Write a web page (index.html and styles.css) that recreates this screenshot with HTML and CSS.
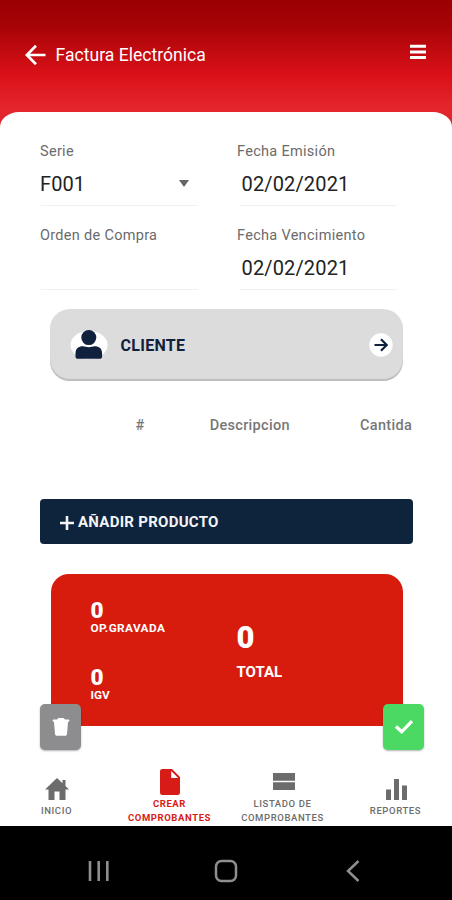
FILE: index.html
```html
<!DOCTYPE html>
<html lang="es">
<head>
<meta charset="utf-8">
<meta name="viewport" content="width=device-width, initial-scale=1">
<title>Factura Electrónica</title>
<link rel="stylesheet" href="styles.css">
</head>
<body>
<div class="app">
  <header class="topbar">
    <svg class="back" width="22" height="22" viewBox="0 0 22 22"><path d="M11 1.800 1.800 11l9.200 9.200M2 11h18.500" fill="none" stroke="currentColor" stroke-width="2.700"/></svg>
    <h1 class="title">Factura Electrónica</h1>
    <svg class="menu" width="16" height="16" viewBox="0 0 16 16" fill="currentColor"><path d="M0 .8h16v3H0zM0 6.400h16v3H0zM0 12h16v3H0z"/></svg>
  </header>
  <main class="sheet">
    <form class="fields">
      <div class="field">
        <span class="label">Serie</span>
        <div class="value"><span class="serie">F001</span><svg class="caret" width="10" height="7" viewBox="0 0 10 7"><path d="M0 0h10L5 7z" fill="currentColor"/></svg></div>
      </div>
      <div class="field">
        <span class="label">Fecha Emisión</span>
        <div class="value date">02/02/2021</div>
      </div>
      <div class="field">
        <span class="label">Orden de Compra</span>
        <div class="value"></div>
      </div>
      <div class="field">
        <span class="label">Fecha Vencimiento</span>
        <div class="value date">02/02/2021</div>
      </div>
    </form>
    <section class="client">
      <svg class="avatar" width="38" height="34" viewBox="0 0 38 34"><ellipse cx="19" cy="17" rx="18.500" ry="14" fill="#fff"/><circle cx="18.800" cy="9.600" r="7.500" fill="currentColor"/><path d="M5.500 28.500v-3c0-5 3-7.200 7.500-7.200 2 0 3.500.9 5.800.9s3.800-.9 5.800-.9c4.500 0 7.500 2.200 7.500 7.200v3c0 1.400-1 2.300-2.400 2.300H7.900c-1.400 0-2.400-.9-2.400-2.300z" fill="currentColor"/></svg>
      <span class="client-name">CLIENTE</span>
      <svg class="go" width="24" height="24" viewBox="0 0 24 24"><circle cx="12" cy="12" r="11.700" fill="#fff"/><path d="M5.500 12h11.500M12 6.300l5.700 5.700-5.700 5.700" fill="none" stroke="currentColor" stroke-width="2.200"/></svg>
    </section>
    <div class="columns"><span class="num">#</span><span class="desc">Descripcion</span><span class="qty">Cantida</span></div>
    <button class="add" type="button"><svg width="14" height="14" viewBox="0 0 14 14"><path d="M7 0v14M0 7h14" stroke="currentColor" stroke-width="2.600"/></svg><span>AÑADIR PRODUCTO</span></button>
    <section class="totals">
      <div class="parts">
        <div class="part"><b>0</b><small class="taxed">OP.GRAVADA</small></div>
        <div class="part"><b>0</b><small>IGV</small></div>
      </div>
      <div class="total"><b>0</b><span>TOTAL</span></div>
      <button class="fab trash" type="button" aria-label="Eliminar"><svg width="18" height="20" viewBox="0 0 18 20" fill="currentColor"><path d="M.5 4 1 2.500h4L6.500 1h5L13 2.500h4l.5 1.500-1.500 1L15 17c-.1 1.200-.8 1.800-2 1.800H5c-1.200 0-1.900-.6-2-1.800L2 5z"/></svg></button>
      <button class="fab ok" type="button" aria-label="Confirmar"><svg width="20" height="16" viewBox="0 0 20 16"><path d="M2 7.500l5.700 5.300L18 2.200" fill="none" stroke="currentColor" stroke-width="3.300"/></svg></button>
    </section>
    <nav class="tabs">
      <a class="tab"><svg width="24" height="22" viewBox="0 0 24 22" fill="currentColor"><path d="M12 0 0 11.500h3.500V22h6v-8.500h5V22h6V11.500H24l-3.500-3.400V2h-3v3.200z"/></svg><span>INICIO</span></a>
      <a class="tab active"><svg width="20" height="26" viewBox="0 0 20 26" fill="currentColor"><path d="M2.300 0H12l8 8v15.700a2.300 2.300 0 0 1-2.300 2.300H2.300A2.300 2.300 0 0 1 0 23.700V2.300A2.300 2.300 0 0 1 2.300 0zm8.900 2v7h7z"/></svg><span>CREAR<br>COMPROBANTES</span></a>
      <a class="tab list"><svg width="22" height="17" viewBox="0 0 22 17" fill="currentColor"><path d="M0 0h22v7.700H0zM0 9.300h22V17H0z"/></svg><span>LISTADO DE<br>COMPROBANTES</span></a>
      <a class="tab"><svg class="bars" width="21" height="21" viewBox="0 0 21 21" fill="currentColor"><path d="M0 10.500h5V21H0zM8 0h5v21H8zM16 6.500h5V21h-5z"/></svg><span>REPORTES</span></a>
    </nav>
  </main>
  <footer class="system">
    <svg width="22" height="22" viewBox="0 0 22 22"><path d="M2 1v20M10.700 1v20M19.300 1v20" stroke="currentColor" stroke-width="2.600"/></svg>
    <svg class="home" width="24" height="24" viewBox="0 0 24 24"><rect x="2" y="2" width="20" height="20" rx="5.500" fill="none" stroke="currentColor" stroke-width="2.500"/></svg>
    <svg width="14" height="22" viewBox="0 0 14 22"><path d="M12.500 1 2 11l10.500 10" fill="none" stroke="currentColor" stroke-width="2.500"/></svg>
  </footer>
</div>
</body>
</html>
```

FILE: styles.css
```css
* { box-sizing: border-box; }
body { margin: 0; background: #000; font-family: Roboto, "Liberation Sans", sans-serif; }
svg { display: block; flex: none; }
button { border: 0; font: inherit; }

.app {
  width: 452px;
  height: 900px;
  display: flex;
  flex-direction: column;
  background: linear-gradient(#9a0002 0, #a80408 28px, #da1018 74px, #e4262c 108px, #d9252b 130px);
}

.topbar {
  height: 112px;
  padding: 0 26px 3px 25px;
  display: flex;
  align-items: center;
  color: #fff;
}
.title { margin: 0 0 0 8.5px; font-size: 17.5px; font-weight: 400; letter-spacing: .04px; }
.menu { margin: 0 0 6px auto; }

.sheet {
  height: 714px;
  padding: 0 40px;
  background: #fff;
  border-radius: 19px 19px 0 0 / 15px 15px 0 0;
  display: flex;
  flex-direction: column;
}

.fields {
  padding-top: 30px;
  display: grid;
  grid-template-columns: 158px 160px;
  column-gap: 39px;
  row-gap: 19px;
}
.field { height: 65px; }
.label { display: block; line-height: 20px; font-size: 14.5px; letter-spacing: .3px; color: #6b6b6b; }
.value {
  height: 44px;
  margin-left: 1px;
  display: flex;
  align-items: center;
  justify-content: space-between;
  padding: 0 9px 0 0;
  border-bottom: 1px solid #f1f1f1;
  font-size: 20px;
  letter-spacing: .1px;
  color: #222;
}
.serie { margin-left: -1px; }
.caret { color: #666; }
.date { margin-left: 3px; padding-left: 1.5px; letter-spacing: .15px; }

.client {
  height: 72px;
  margin: 18px 9px 0 10px;
  padding: 0 10px 0 20px;
  display: flex;
  align-items: center;
  border-radius: 20px;
  background: #dcdcdc;
  box-shadow: inset 0 -2px 1px #bdbdbd;
  color: #10213d;
}
.client-name { margin-left: 12.5px; font-size: 16px; font-weight: 700; letter-spacing: .3px; }
.go { margin-left: auto; }

.columns {
  margin-top: 35px;
  height: 20px;
  display: flex;
  line-height: 20px;
  font-size: 14.5px;
  font-weight: 500;
  letter-spacing: .3px;
  color: #777;
}
.num { width: 75px; margin-left: 95.5px; }
.desc { width: 152px; }

.add {
  height: 45px;
  margin: 63px -1px 0 0;
  padding: 0 20px;
  display: flex;
  align-items: center;
  gap: 4px;
  border-radius: 4px;
  background: #0e233c;
  color: #f2f4f6;
  font-size: 15px;
  font-weight: 700;
  letter-spacing: .27px;
}
.add svg { margin-top: 3px; }

.totals {
  position: relative;
  height: 152px;
  margin: 30px 9px 0 11px;
  padding-left: 39.5px;
  display: flex;
  border-radius: 18px;
  background: #d71b0d;
  color: #fff;
  font-weight: 700;
}
.parts { width: 146px; padding-top: 24px; display: grid; grid-auto-rows: 67px; align-content: start; }
.part b, .part small { display: block; }
.part b { font-size: 22.5px; line-height: 25px; }
.part small { font-size: 11.8px; line-height: 11px; }
.part .taxed { letter-spacing: .4px; }
.total { padding-top: 47px; }
.total b, .total span { display: block; }
.total b { font-size: 31px; line-height: 34px; }
.total span { margin-top: 7px; font-size: 15px; line-height: 20px; }

.fab {
  position: absolute;
  top: 130px;
  width: 41px;
  height: 46px;
  padding: 0;
  display: grid;
  place-items: center;
  border-radius: 5px;
  color: #fff;
  box-shadow: 0 1px 2px rgba(0, 0, 0, .3);
}
.trash { left: -11px; background: #8d8d8f; }
.ok { right: -21px; background: #4bd964; }

.tabs {
  height: 82px;
  margin: auto -40px 0;
  display: grid;
  grid-template-columns: repeat(4, 113px);
}
.tab {
  display: flex;
  flex-direction: column;
  align-items: center;
  padding-top: 34px;
  color: #6c6c6c;
  font-size: 9.5px;
  font-weight: 500;
  line-height: 14px;
  letter-spacing: .6px;
  text-align: center;
}
.tab span { margin-top: 4px; white-space: nowrap; }
.bars { margin: 1px 0 0 2px; }
.active { padding-top: 25px; color: #d71b17; font-weight: 700; }
.active span { margin-top: 2px; }
.list { padding-top: 29px; }
.list svg { margin-left: 2px; }
.list span { margin-top: 7px; }

.system {
  height: 74px;
  padding: 15px 92px 0 88px;
  display: flex;
  align-items: center;
  justify-content: space-between;
  background: #000;
  color: #8f8f8f;
}
.home { margin-right: 4px; }
```
